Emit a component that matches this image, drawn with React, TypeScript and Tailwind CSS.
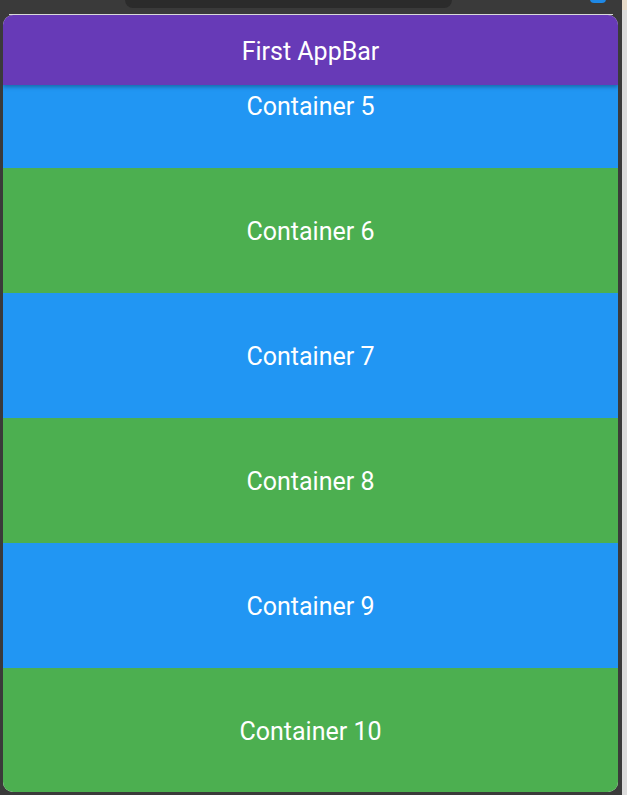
import React from 'react';

const items = [
  { label: 'Container 5', color: 'bg-[#2196f3]' },
  { label: 'Container 6', color: 'bg-[#4caf50]' },
  { label: 'Container 7', color: 'bg-[#2196f3]' },
  { label: 'Container 8', color: 'bg-[#4caf50]' },
  { label: 'Container 9', color: 'bg-[#2196f3]' },
  { label: 'Container 10', color: 'bg-[#4caf50]' },
];

const App: React.FC = () => {
  return (
    <div
      className="relative flex h-[795px] w-[627px] overflow-hidden bg-[#3a3a3a]"
      style={{ fontFamily: 'Roboto, "Noto Sans", sans-serif' }}
    >
      {/* Blue status icon peeking in top right */}
      <div className="absolute left-[590px] top-[-6px] h-[9px] w-[16px] rounded-[4px] bg-[#1e88e5]" />

      <div className="flex w-[622px] flex-col">
        {/* Top bar with notch */}
        <div className="flex h-[14px]">
          <div className="ml-[125px] h-[8px] w-[327px] rounded-b-[12px] bg-[#2b2b2b]" />
        </div>
        <div className="mx-[9px] h-px bg-[#d9d9d9]" />

        {/* Device screen */}
        <div className="ml-[3px] flex h-[777px] w-[615px] flex-col overflow-hidden rounded-[10px] bg-white">
          <div className="relative z-10 flex h-[70px] shrink-0 items-center justify-center bg-[#673ab7] pt-[2px] shadow-[0_2px_4px_rgba(0,0,0,0.3)]">
            <span className="text-[25px] leading-none text-white">First AppBar</span>
          </div>
          <div className="flex-1 overflow-hidden">
            <div className="-mt-[42px] flex flex-col">
              {items.map((item) => (
                <div
                  key={item.label}
                  className={`flex h-[125px] shrink-0 items-center justify-center pt-[2px] ${item.color}`}
                >
                  <span className="text-[25px] leading-none text-white">{item.label}</span>
                </div>
              ))}
            </div>
          </div>
        </div>
      </div>

      {/* Right edge strip */}
      <div className="flex w-[5px] flex-col bg-[#dcdcdc]">
        <div className="h-[10px] bg-[#e8dccb]" />
      </div>
    </div>
  );
};

export default App;
